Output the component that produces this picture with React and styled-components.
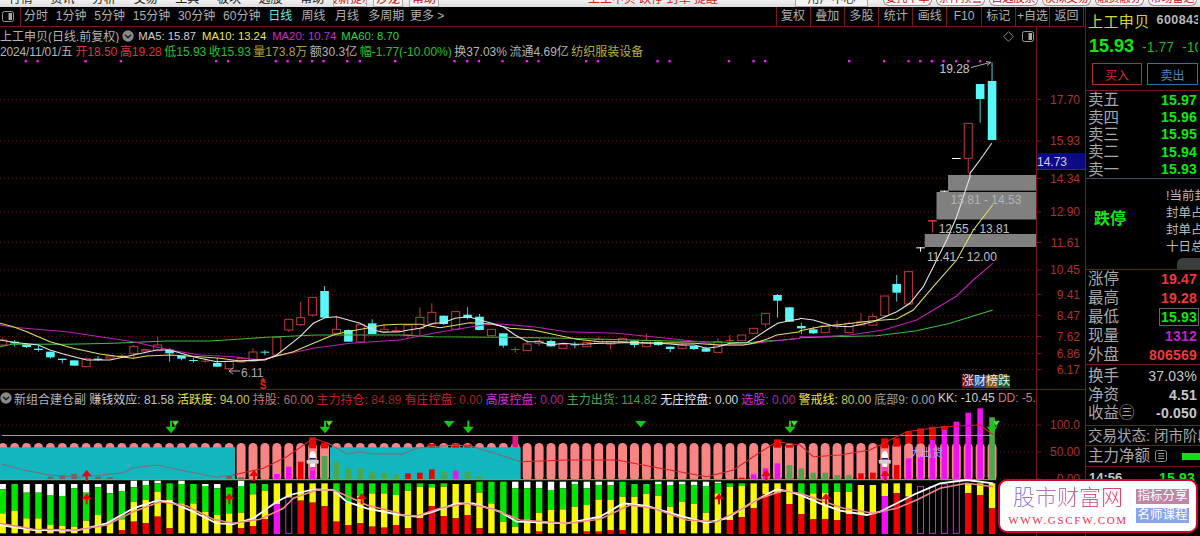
import React from 'react';
import styled, { createGlobalStyle } from 'styled-components';

const FONT = `"Liberation Sans", "Noto Sans CJK SC", sans-serif`;
const RULE = '#7a1818';

const Global = createGlobalStyle`
  html, body { margin: 0; padding: 0; background: #000; overflow: hidden; }
  * { box-sizing: border-box; }
`;

const Shell = styled.div`
  position: relative; width: 1200px; height: 536px; overflow: hidden;
  background: #000; font-family: ${FONT}; font-size: 12px; color: #b4b4b4;
  display: flex; flex-direction: column;
`;

/* ---------- clipped window strip ---------- */
const Strip = styled.div`
  height: 7px; flex: none; display: flex; align-items: flex-end; overflow: hidden;
  background: linear-gradient(#f2f2f2, #dcdcdc);
`;
const StripGroup = styled.div`
  width: ${p => p.$w}px; flex: none; height: 7px; display: flex; align-items: flex-end;
  justify-content: ${p => p.$justify || 'flex-start'}; gap: ${p => p.$gap || 0}px;
`;
const StripLabel = styled.span`
  flex: none; line-height: 14px; height: 14px; margin-bottom: 1px; margin-left: ${p => p.$ml || 0}px; white-space: nowrap;
  color: ${p => p.$c || '#222'}; font-size: ${p => p.$s || 12}px;
`;
const StripTab = styled.span`
  flex: none; width: ${p => p.$w}px; height: 7px; display: flex; align-items: flex-end; justify-content: center;
  border: 1px solid #a8a8a8; border-top: 0; background: #f3f3f3; overflow: hidden;
  color: ${p => p.$c || '#c11'}; white-space: nowrap; line-height: 14px;
`;
const StripPill = styled.span`
  flex: none; width: 49px; height: 6px; margin-bottom: 1px; display: flex; align-items: flex-end; justify-content: center;
  border: 1px solid #9c8a8a; border-top: 0; border-radius: 0 0 6px 6px; background: #fafafa; overflow: hidden;
  color: #c11; white-space: nowrap; line-height: 14px; font-size: 11px;
`;

/* ---------- layout ---------- */
const Body = styled.div`flex: 1; display: flex; min-height: 0;`;
const Main = styled.div`width: 1085px; flex: none; display: flex; flex-direction: column;`;

const Toolbar = styled.div`
  height: 20px; flex: none; display: flex; align-items: center; border-bottom: 1px solid ${RULE};
`;
const ToolIconCell = styled.div`
  width: 21px; height: 19px; flex: none; display: flex; align-items: center; padding-left: 2px;
  border-right: 1px solid ${RULE};
`;
const PeriodList = styled.div`flex: 1; display: flex; align-items: center; padding-left: 3px; gap: 7.8px;`;
const Period = styled.span`
  white-space: nowrap; line-height: 19px; color: ${p => (p.$on ? '#6fe6e6' : '#b0b0b0')};
  margin-left: ${p => p.$ml || 0}px;
`;
const ToolButtons = styled.div`display: flex; height: 19px; flex: none;`;
const ToolButton = styled.span`
  width: ${p => p.$w || 34.2}px; display: flex; align-items: center; justify-content: center; white-space: nowrap;
  border-left: 1px solid ${RULE}; color: #b0b0b0; line-height: 19px;
`;

const PaneRow = styled.div`
  display: flex; flex: none; height: ${p => p.$h}px; border-top: ${p => (p.$rule ? `1px solid ${RULE}` : '0')};
`;
const Plot = styled.div`
  position: relative; width: 1037px; flex: none; display: flex; flex-direction: column;
  border-right: 1px solid ${RULE}; overflow: hidden;
`;
const Axis = styled.svg`display: block; width: 48px; flex: none; height: 100%;`;
const Canvas = styled.svg`display: block; width: 1036px; flex: 1; min-height: 0;`;

const Head = styled.div`height: 31px; flex: none; position: relative; padding-top: 1px;`;
const InfoRow = styled.div`
  display: flex; align-items: center; height: 15px; gap: ${p => p.$gap || 0}px; white-space: nowrap; overflow: hidden;
`;
const Seg = styled.span`
  color: ${p => p.$c || '#b4b4b4'}; flex: none; margin-left: ${p => p.$ml || 0}px;
  font-size: ${p => p.$s || 12}px; letter-spacing: ${p => p.$ls || 0}px;
`;
const CornerIcons = styled.div`
  position: absolute; right: 2px; top: 4px; display: flex; gap: 8px; align-items: center;
`;
const RoundIcon = styled.svg`flex: none; display: block;`;

const IndHead = styled.div`
  height: 16px; flex: none; display: flex; align-items: center; gap: 3.1px; white-space: nowrap; overflow: hidden;
`;
const Pair = styled.span`color: ${p => p.$c}; flex: none;`;
const Val = styled.span`color: ${p => p.$c};`;

const Rank = styled.div`
  position: absolute; left: 962px; top: 348px; display: flex; height: 13px;
`;
const RankCell = styled.span`
  width: 12px; text-align: center; line-height: 13px; font-size: 12px; color: #e8e8e8; background: ${p => p.$bg};
`;

/* ---------- side panel ---------- */
const Side = styled.div`
  width: 115px; flex: none; display: flex; flex-direction: column; overflow: hidden; white-space: nowrap;
  border-left: 1px solid ${RULE};
`;
const Section = styled.div`
  flex: none; height: ${p => p.$h}px; border-bottom: 1px solid ${p => p.$line || RULE}; padding: ${p => p.$pad || '0 2px 0 2px'};
  display: flex; flex-direction: column; justify-content: ${p => p.$justify || 'flex-start'}; overflow: hidden;
`;
const NameRow = styled.div`display: flex; align-items: center; height: 26px; overflow: hidden;`;
const StockName = styled.span`color: #d6d63c; font-size: 15px; letter-spacing: .4px; flex: none;`;
const StockCode = styled.span`color: #b8b8b8; font-size: 12.5px; font-weight: 700; margin-left: 7px; letter-spacing: .4px; flex: none;`;
const QuoteRow = styled.div`display: flex; align-items: center; height: 27px; overflow: hidden;`;
const Price = styled.span`color: #10e810; font-weight: 700; font-size: 18px; flex: none; margin-left: 1px;`;
const Change = styled.span`color: #18b818; font-size: 14px; flex: none; margin-left: ${p => p.$ml}px;`;
const TradeRow = styled.div`display: flex; gap: 5px; padding: 3px 0 0 4px;`;
const TradeBtn = styled.span`
  width: ${p => p.$w}px; height: 22px; flex: none; display: flex; align-items: center; justify-content: center;
  border: 1px solid ${p => p.$c}; color: ${p => p.$t}; font-size: 12px;
`;
const Row = styled.div`
  display: flex; justify-content: ${p => p.$justify || 'space-between'}; align-items: center; height: ${p => p.$h}px; flex: none;
  padding: ${p => p.$pad || 0};
`;
const RowLabel = styled.span`
  color: ${p => p.$c || '#a8a8a8'}; font-size: ${p => p.$s || 15.5}px; font-weight: ${p => p.$w || 400}; line-height: ${p => p.$h || 18}px;
`;
const RowValue = styled.span`
  color: ${p => p.$c}; font-size: 14px; font-weight: ${p => p.$w || 700}; letter-spacing: .2px; padding: 0 1px;
  outline: ${p => (p.$box ? '1px solid #666' : 'none')}; outline-offset: 0;
`;
const LimitBlock = styled.div`flex: 1; display: flex; align-items: center; min-height: 0;`;
const LimitTag = styled.span`color: #10e810; font-size: 16px; font-weight: 700; margin: -14px 0 0 6px; flex: none;`;
const LimitList = styled.div`margin-left: 40px; display: flex; flex-direction: column; flex: none; margin-top: -4px;`;
const LimitLine = styled.span`color: #b8b8b8; font-size: 12.5px; line-height: 16.8px;`;
const GrayTab = styled.span`
  position: absolute; left: 1177px; top: 258px; width: 30px; height: 11px; background: #3c3c3c; border-radius: 6px 6px 0 0;
`;
const FlowBar = styled.span`width: 24px; height: 7px; background: #10e010; margin-left: 15px; flex: none;`;
const SheetIcon = styled.svg`flex: none; display: block; margin-left: 5px;`;

/* ---------- watermark ---------- */
const Stamp = styled.div`
  position: absolute; left: 998px; top: 479px; width: 200px; height: 54px; border: 2px solid #d4002c; border-radius: 9px;
  background: #fff; display: flex; align-items: center; padding-left: 12px;
`;
const StampLeft = styled.div`width: 112px; flex: none; display: flex; flex-direction: column; align-items: center;`;
const StampTitle = styled.span`
  font-size: 22px; line-height: 26px; font-weight: 300; white-space: nowrap;
  background: linear-gradient(90deg, #8a78e8, #c86ab0 45%, #e83c5c); -webkit-background-clip: text; background-clip: text; color: transparent;
`;
const StampUrl = styled.span`
  font-family: "Liberation Serif", serif; font-size: 11px; letter-spacing: 1.7px; color: #e8304c; line-height: 13px; margin-top: 3px; white-space: nowrap;
`;
const StampTags = styled.div`margin-left: 12px; display: flex; flex-direction: column; gap: 4px;`;
const StampTag = styled.span`
  width: 53px; height: 15px; background: ${p => p.$bg}; color: #fff; font-size: 12.5px; line-height: 15px; text-align: center; white-space: nowrap;
`;

/* ---------- data ---------- */
const barX = i => 2.7 + 11.92 * i;
const pts = (list, base, xo = 0) => list.map(([x, y]) => `${(xo + x / 3).toFixed(1)},${(base + y / 3).toFixed(1)}`).join(' ');

const dots = [
  ...[77, 112, 256, 362, 648, 684, 827, 862, 900, 936, 970, 1041, 1079, 1185].map(x => x / 3),
  ...[163, 201, 236, 307, 380, 415, 558, 593, 772, 808, 986, 1060, 1095].map(x => 400 + x / 3),
  ...[147, 252, 325, 360, 395, 430, 468, 504, 540].map(x => 800 + x / 3),
];

// [top, bottom, wickTop, wickBottom, kind] in 3x crop coordinates
const candlesA = [
  [180, 195, 172, 198, 'r'], [185, 190, 180, 200, 'c'], [193, 201, 190, 204, 'c'], [206, 210, 197, 215, 'c'],
  [215, 232, 215, 236, 'c'], [236, 240, 236, 250, 'c'], [241, 257, 241, 257, 'c'], [236, 260, 232, 262, 'r'],
  [236, 240, 228, 243, 'c'], [228, 234, 224, 236, 'r'], [227, 231, 224, 233, 'o'], [200, 220, 195, 238, 'r'],
  [209, 213, 209, 213, 'r'], [195, 212, 170, 212, 'r'], [209, 220, 205, 245, 'c'], [228, 236, 228, 241, 'c'],
  [240, 243, 234, 248, 'c'], [242, 245, 235, 248, 'f'], [249, 260, 235, 260, 'c'], [244, 266, 244, 268, 'r'],
  [235, 246, 232, 248, 'r'], [216, 243, 205, 245, 'r'], [215, 218, 210, 226, 'c'], [172, 225, 172, 225, 'r'],
  [118, 150, 118, 155, 'r'], [113, 134, 65, 138, 'r'], [52, 105, 52, 110, 'r'], [33, 113, 18, 113, 'c'],
  [148, 160, 110, 160, 'r'], [150, 185, 148, 185, 'c'], [134, 186, 134, 186, 'r'], [130, 162, 118, 162, 'c'],
  [148, 155, 132, 160, 'r'], [152, 155, 140, 158, 'r'],
  [135, 165, 135, 175, 'r'], [112, 145, 82, 165, 'r'], [97, 132, 70, 135, 'r'], [107, 132, 107, 135, 'c'],
  [95, 148, 95, 150, 'r'], [104, 114, 82, 118, 'c'], [110, 150, 102, 150, 'c'], [148, 167, 148, 167, 'r'],
  [160, 197, 160, 203, 'c'], [207, 210, 200, 218, 'f'], [192, 212, 180, 212, 'r'], [183, 190, 175, 198, 'r'],
  [183, 199, 178, 200, 'c'], [193, 205, 193, 205, 'r'], [193, 196, 185, 205, 'c'], [187, 200, 187, 200, 'r'],
  [178, 190, 170, 190, 'r'], [184, 192, 184, 208, 'r'], [175, 187, 175, 187, 'r'], [182, 195, 182, 203, 'c'],
  [182, 200, 160, 200, 'r'], [185, 195, 185, 198, 'c'], [200, 207, 200, 217, 'c'], [195, 205, 190, 208, 'r'],
  [198, 207, 198, 210, 'c'], [205, 215, 200, 216, 'c'], [185, 217, 175, 217, 'r'], [180, 183, 165, 186, 'f'],
  [165, 182, 165, 182, 'r'], [145, 160, 145, 160, 'r'], [100, 132, 100, 143, 'r'], [45, 62, 42, 113, 'c'],
  [82, 125, 82, 125, 'c'],
];
const candlesB = [
  [468, 475, 458, 492, 'c'], [478, 490, 470, 492, 'c'], [468, 488, 468, 488, 'r'], [463, 466, 452, 478, 'f'],
  [460, 488, 455, 490, 'r'], [455, 465, 430, 468, 'r'], [440, 465, 430, 465, 'r'], [378, 437, 378, 437, 'r'],
  [342, 368, 315, 395, 'c'], [305, 402, 305, 402, 'r'], [232, 234, 232, 245, 'w'], [150, 155, 150, 188, 'f'],
  [62, 64, 62, 66, 'w'],
];
const candlesC = [
  [474, 476, 474, 476, 'w'], [370, 475, 370, 520, 'r'], [252, 297, 252, 368, 'c'], [243, 420, 187, 243, 'c'],
];

const ma5 = [
  ...pts([[0, 180], [40, 187], [115, 195], [150, 210], [190, 222], [260, 240], [330, 240], [400, 225], [470, 210], [510, 210], [580, 230], [650, 245], [720, 243], [795, 240], [830, 225], [900, 170], [940, 130], [975, 113], [1010, 110], [1080, 130], [1120, 150], [1150, 157], [1199, 155]], 280).split(' '),
  ...pts([[25, 150], [60, 145], [100, 130], [130, 128], [165, 115], [205, 110], [240, 120], [275, 130], [310, 140], [345, 165], [383, 185], [420, 185], [450, 195], [490, 190], [525, 193], [560, 192], [600, 190], [630, 190], [670, 188], [705, 188], [740, 188], [776, 190], [811, 192], [847, 195], [883, 195], [919, 205], [955, 200], [990, 190], [1040, 188], [1063, 175], [1100, 150], [1133, 130], [1168, 122], [1199, 117]], 280, 400).split(' '),
  ...pts([[0, 445], [40, 450], [100, 468], [150, 470], [220, 455], [290, 425], [330, 400], [370, 350], [410, 270], [440, 210], [470, 140], [510, 20]], 170, 800).split(' '),
  ...pts([[510, 520], [540, 480], [575, 430]], 0, 800).split(' '),
].join(' ');
const ma10 = [
  pts([[0, 130], [40, 140], [80, 155], [150, 185], [220, 205], [300, 222], [360, 230], [400, 235], [440, 228], [510, 225], [600, 230], [660, 235], [720, 243], [795, 238], [830, 228], [880, 215], [940, 190], [1000, 165], [1040, 155], [1100, 145], [1150, 135], [1199, 133]], 280),
  pts([[0, 133], [60, 133], [120, 143], [170, 135], [210, 128], [275, 132], [330, 145], [400, 150], [470, 165], [530, 178], [600, 185], [668, 185], [740, 190], [810, 188], [883, 190], [955, 195], [1030, 195], [1060, 190], [1100, 178], [1130, 165], [1199, 155]], 280, 400),
  pts([[0, 482], [60, 470], [110, 465], [220, 452], [290, 447], [340, 420], [400, 350], [470, 270], [520, 180], [578, 105]], 170, 800),
].join(' ');
const ma20 = [
  pts([[0, 135], [40, 142], [200, 155], [400, 185], [510, 210], [600, 225], [700, 230], [780, 240], [830, 228], [940, 205], [1050, 190], [1199, 180]], 280),
  pts([[0, 180], [100, 160], [170, 148], [250, 135], [300, 132], [400, 140], [500, 155], [650, 160], [800, 175], [900, 185], [955, 195], [1030, 195], [1100, 185], [1199, 175]], 280, 400),
  pts([[0, 500], [60, 500], [150, 495], [250, 480], [350, 450], [470, 378], [520, 330], [578, 280]], 170, 800),
].join(' ');
const ma60 = [
  pts([[0, 200], [40, 192], [200, 193], [340, 190], [500, 183], [630, 183], [800, 172], [950, 165], [1100, 165], [1199, 165]], 280),
  pts([[0, 165], [100, 170], [300, 172], [500, 175], [700, 180], [900, 185], [1040, 188], [1100, 183], [1150, 180], [1199, 175]], 280, 400),
  pts([[0, 503], [100, 500], [230, 497], [350, 482], [450, 460], [578, 420]], 170, 800),
].join(' ');

// stack bars: [top, whiteEnd, greenEnd, yellowEnd, base colour]
const stacks = [
  [312, 328, 400, 460], [312, 312, 392, 460], [312, 338, 415, 460], [312, 338, 415, 460], [312, 345, 435, 460], [312, 348, 438, 460],
  [312, 325, 440, 460], [312, 338, 422, 460], [312, 322, 405, 460], [312, 340, 425, 460], [312, 333, 418, 450, 'r'], [302, 322, 365, 425, 'r'],
  [302, 315, 360, 430, 'r'], [302, 310, 335, 410, 'r'], [310, 310, 360, 445, 'r'], [302, 312, 370, 460], [312, 312, 370, 460], [312, 318, 395, 460],
  [312, 325, 405, 460], [322, 322, 400, 460], [302, 318, 398, 445, 'r'], [310, 310, 343, 438, 'r'], [312, 312, 332, 418, 'r'], [310, 310, 310, 372, 'm'],
  [310, 310, 310, 352], [310, 310, 310, 362, 'r'], [310, 310, 310, 368, 'r'], [310, 310, 310, 378, 'r'], [310, 310, 335, 425, 'r'], [310, 310, 368, 435, 'r'],
  [310, 310, 348, 430, 'r'], [310, 310, 340, 440, 'r'], [310, 310, 340, 443, 'r'], [310, 310, 345, 435, 'r'], [310, 310, 332, 445, 'r'], [310, 310, 320, 415, 'r'],
  [312, 312, 322, 378, 'r'], [310, 310, 320, 408, 'r'], [312, 312, 312, 415, 'r'], [312, 312, 312, 405, 'r'], [305, 305, 338, 445, 'r'], [305, 305, 370, 460],
  [305, 305, 425, 460], [305, 325, 440, 460], [305, 325, 418, 460], [305, 325, 398, 455, 'r'], [305, 330, 390, 460], [305, 325, 388, 460],
  [305, 312, 380, 460], [305, 325, 375, 455, 'r'], [305, 315, 360, 455, 'r'], [305, 315, 360, 450, 'r'], [305, 305, 350, 450, 'r'], [312, 312, 350, 460],
  [312, 312, 342, 460], [305, 312, 348, 460], [305, 315, 380, 460], [305, 312, 365, 460], [305, 315, 372, 460], [305, 318, 398, 460],
  [305, 310, 340, 460], [310, 310, 320, 420, 'r'], [310, 310, 318, 412, 'r'], [310, 310, 310, 385, 'r'], [310, 310, 310, 342, 'r'], [310, 310, 310, 340, 'r'],
  [310, 310, 310, 372, 'r'], [310, 310, 340, 402, 'r'], [310, 310, 340, 418, 'r'], [310, 310, 338, 418, 'r'], [310, 310, 335, 420, 'r'], [310, 310, 335, 402, 'r'],
  [315, 315, 315, 402, 'r'], [315, 315, 315, 402, 'r'], [310, 310, 310, 348, 'm'], [310, 310, 310, 340, 'r'], [310, 310, 310, 350, 'r'], null,
  null, null, null, [310, 310, 310, 340, 'r'], [310, 310, 310, 345, 'r'], [310, 310, 310, 385, 'r'],
];
const outlines = [[24, 352], [77, 320], [78, 320], [79, 312], [80, 300]];

// small bars standing on the zero line: [index, top, bottom, colour]
const GREY = '#6e6464', DG = '#4ca64c', MG = '#f010f0', RD = '#ee0000';
const columns = [
  [4, 290, 298, GREY], [5, 285, 298, GREY], [6, 282, 298, GREY], [8, 290, 298, GREY], [9, 292, 298, GREY], [19, 288, 298, GREY], [20, 292, 298, GREY],
  [23, 282, 298, MG], [24, 260, 298, MG], [25, 245, 298, RD], [26, 255, 298, MG], [26, 172, 205, RD], [27, 228, 298, DG], [27, 188, 205, RD], [28, 245, 298, DG], [29, 265, 298, DG], [30, 265, 298, DG],
  [31, 275, 298, DG], [32, 278, 298, DG], [33, 282, 298, DG], [34, 280, 298, RD], [35, 278, 298, RD], [36, 268, 298, RD], [36, 192, 203, RD], [37, 275, 298, DG], [38, 272, 298, MG], [38, 190, 203, RD], [39, 275, 298, DG], [39, 194, 203, RD], [40, 288, 298, DG],
  [43, 168, 202, '#f0108c'], [62, 293, 298, RD], [63, 283, 298, MG], [64, 265, 298, MG], [65, 250, 298, MG], [65, 178, 203, RD], [66, 255, 298, DG], [66, 195, 203, RD],
  [67, 265, 298, DG], [68, 278, 298, DG], [69, 278, 298, DG], [70, 285, 298, DG], [71, 285, 298, DG], [72, 280, 298, RD], [73, 278, 298, RD],
  [74, 175, 205, RD], [74, 255, 298, MG], [75, 175, 200, RD], [75, 255, 298, RD], [76, 155, 190, RD], [76, 235, 298, MG], [77, 145, 190, RD], [77, 230, 298, MG],
  [78, 140, 180, RD], [78, 180, 298, MG], [79, 138, 150, RD], [79, 150, 298, MG], [80, 125, 298, MG], [81, 98, 298, MG], [82, 85, 298, MG], [83, 112, 298, DG],
];

const upRed = [[260, 285], [260, 355], [688, 355], [762, 285], [1085, 355], [1200 + 957, 355], [1200 + 1099, 285], [2400 + 78, 355], [2400 + 256, 285]];

const lowWhite = [
  pts([[0, 435], [100, 450], [230, 452], [320, 430], [400, 385], [470, 362], [510, 365], [580, 395], [650, 430], [700, 432], [760, 415], [830, 365], [870, 345], [940, 328], [1000, 330], [1040, 365], [1100, 385], [1199, 405]], 380),
  pts([[0, 405], [50, 410], [100, 395], [170, 370], [220, 370], [300, 395], [350, 425], [500, 430], [600, 410], [670, 370], [740, 378], [850, 410], [920, 428], [980, 415], [1060, 365], [1130, 328], [1170, 335], [1199, 345]], 380, 400),
  pts([[0, 345], [60, 370], [120, 392], [200, 405], [240, 395], [290, 370], [350, 340], [420, 310], [500, 300], [580, 310]], 380, 800),
].join(' ');
const lowPink = [
  pts([[0, 430], [100, 448], [230, 450], [320, 435], [400, 395], [480, 365], [560, 378], [640, 418], [700, 430], [780, 418], [850, 385], [880, 355], [950, 330], [1000, 330], [1050, 352], [1100, 375], [1199, 400]], 380),
  pts([[0, 405], [50, 408], [120, 385], [200, 370], [280, 388], [360, 420], [500, 430], [600, 418], [690, 375], [760, 385], [860, 420], [950, 425], [1030, 385], [1080, 355], [1150, 332], [1199, 340]], 380, 400),
  pts([[0, 340], [60, 360], [130, 385], [220, 400], [290, 385], [350, 360], [420, 325], [500, 310], [580, 320]], 380, 800),
].join(' ');
const ratioOnTeal1 = pts([[5, 252], [70, 270], [150, 285], [240, 292], [300, 285], [370, 278], [400, 263], [470, 255], [540, 270], [650, 292], [700, 285]], 380);
const ratioOnPink1 = pts([[700, 285], [790, 265], [860, 230], [940, 175], [985, 190]], 380);
const ratioOnTeal2 = [
  pts([[985, 190], [1040, 222], [1080, 215], [1120, 222], [1199, 222]], 380),
  pts([[0, 225], [50, 205], [95, 200], [170, 195], [220, 200], [300, 225], [360, 245]], 380, 400),
].join(' ');
const ratioOnPink2 = [
  pts([[360, 245], [500, 240], [650, 240], [780, 265], [920, 290], [1000, 270], [1060, 230], [1130, 185], [1199, 195]], 380, 400),
  pts([[0, 195], [40, 230], [120, 225], [210, 210], [250, 190], [320, 155], [430, 140], [540, 135], [580, 165]], 380, 800),
].join(' ');

const priceTicks = [
  [99.5, '17.70'], [141, '15.93'], [178.5, '14.34'], [212, '12.90'], [242.5, '11.61'], [270, '10.45'],
  [294.5, '9.41'], [315.5, '8.47'], [336.5, '7.62'], [353.5, '6.86'], [369.5, '6.17'],
];
const indTicks = [[425, '100.0'], [452, '50.00'], [479, '0.00']];

/* ---------- chart drawings ---------- */
const Candle = ({ x, base, c: [top, bot, wt, wb, kind] }) => {
  const t = base + top / 3, b = base + bot / 3, wTop = base + wt / 3, wBot = base + wb / 3;
  const col = { r: '#c43a3c', f: '#d23434', c: '#58f8f8', o: '#e08a30', w: '#ffffff' }[kind];
  const wick = kind === 'c' ? '#58c8c8' : col;
  return (
    <g>
      <line x1={x} x2={x} y1={wTop} y2={wBot} stroke={wick} strokeWidth="1" />
      {kind === 'r' ? (
        <rect x={x - 4} y={t} width="8" height={b - t} fill="#000" stroke={col} strokeWidth="1" />
      ) : (
        <rect x={x - 4.3} y={t} width="8.6" height={Math.max(b - t, 1)} fill={col} />
      )}
    </g>
  );
};

const PriceChart = () => (
  <Canvas viewBox="0 58 1036 331" preserveAspectRatio="none">
    {priceTicks.map(([y]) => <line key={y} x1="0" x2="1036" y1={y} y2={y} stroke="#5c1414" strokeDasharray="1 3" />)}
    {dots.map(x => <rect key={x} x={x - 1} y="60" width="2.4" height="2.4" fill="#f020f0" />)}
    {candlesA.map((c, i) => <Candle key={i} x={barX(i)} base={280} c={c} />)}
    {candlesB.map((c, i) => <Candle key={i} x={barX(i + 67)} base={170} c={c} />)}
    {candlesC.map((c, i) => <Candle key={i} x={barX(i + 80)} base={0} c={c} />)}
    <rect x="948" y="175" width="88" height="15.7" fill="#808080" />
    <rect x="936.5" y="192" width="99.5" height="27.5" fill="#808080" />
    <rect x="924.7" y="234" width="111.3" height="13" fill="#808080" />
    <polyline points={ma60} fill="none" stroke="#3cc03c" strokeWidth="1.1" />
    <polyline points={ma20} fill="none" stroke="#c020b8" strokeWidth="1.1" />
    <polyline points={ma10} fill="none" stroke="#e0e060" strokeWidth="1.1" />
    <polyline points={ma5} fill="none" stroke="#e4e4e4" strokeWidth="1.1" />
    <g fontFamily={FONT} fontSize="12">
      <text x="950.6" y="204" fill="#b4b4b4">13.81 - 14.53</text>
      <text x="938.7" y="233" fill="#c0c0c0">12.55 - 13.81</text>
      <text x="927" y="261" fill="#c0c0c0">11.41 - 12.00</text>
      <text x="939.5" y="73" fill="#c8c8c8">19.28</text>
      <text x="241" y="377" fill="#a8a8a8">6.11</text>
    </g>
    <path d="M971 67.5 L990 62.5 M986 61.5 L991 62.4 L987 65.5" fill="none" stroke="#aaa" strokeWidth="1" />
    <path d="M229 371 H240 M233 368 L229 371 L233 374" fill="none" stroke="#aaa" strokeWidth="1" />
    <path d="M263 377.5 L260 381 H266 Z" fill="#d02020" />
    <text x="263" y="388.5" textAnchor="middle" fontFamily={FONT} fontSize="10" fontWeight="700" fill="#e02020">S</text>
  </Canvas>
);

const UpArrow = ({ x, y }) => (
  <g fill="#f00000">
    <rect x={x - 1} y={y - 3} width="2" height="9" />
    <path d={`M${x - 5} ${y + 1} L${x} ${y - 5} L${x + 5} ${y + 1} Z`} />
  </g>
);

const StackBar = ({ i, s }) => {
  if (!s) return null;
  const [top, w, g, yw, base] = s;
  const x = barX(i) - 3.2;
  const Y = v => 380 + v / 3;
  return (
    <g>
      {w > top && <rect x={x} y={Y(top)} width="6.4" height={(w - top) / 3} fill="#ffffff" />}
      {g > w && <rect x={x} y={Y(w)} width="6.4" height={(g - w) / 3} fill="#00e600" />}
      {yw > g && <rect x={x} y={Y(g)} width="6.4" height={(yw - g) / 3} fill="#f8f800" />}
      {base && <rect x={x} y={Y(yw)} width="6.4" height={(462 - yw) / 3} fill={base === 'm' ? '#f010f0' : '#f00000'} />}
    </g>
  );
};

const Figure = ({ x }) => (
  <g>
    <ellipse cx={x} cy="456" rx="3.2" ry="5" fill="#fff" />
    <rect x={x - 6} y="460" width="12" height="3.6" fill="#cfcfcf" />
    <rect x={x - 3} y="458" width="6" height="1.6" fill="#301080" />
    <rect x={x - 3} y="467" width="6" height="4" fill="#f040c0" />
    <rect x={x - 2.5} y="463.6" width="5" height="3.4" fill="#fff" />
  </g>
);

const DownMark = ({ x, y, stem, flag }) => (
  <g fill="#16c816">
    <path d={`M${x - 5.5} ${y} L${x} ${y + 6.6} L${x + 5.5} ${y} Z`} />
    {stem && <rect x={x - 1} y={y - 6} width="2" height="7" />}
    {flag && <path d={`M${x + 1} ${y - 6} H${x + 8} L${x + 4} ${y} Z`} fill="#22d022" />}
    {flag && <path d={`M${x + 2.5} ${y - 5} L${x + 4.2} ${y - 3} L${x + 6} ${y - 5}`} fill="none" stroke="#e8e840" strokeWidth=".7" />}
  </g>
);

const IndicatorChart = () => (
  <Canvas viewBox="0 406 1036 130" preserveAspectRatio="none">
    {indTicks.map(([y]) => <line key={y} x1="0" x2="1036" y1={y} y2={y} stroke="#5c1414" strokeDasharray="1 3" />)}
    {stacks.map((_, i) => <rect key={i} x={barX(i) - 4.5} y="443" width="9" height="38" rx="4.5" fill="#f98484" />)}
    <rect x="0" y="447.3" width="235" height="32.2" fill="#12b6bf" />
    <rect x="330" y="447.3" width="190.7" height="32.2" fill="#12b6bf" />
    <rect x="0" y="480" width="1036" height="56" fill="#000" />
    {columns.map(([i, a, b, c], k) => (
      <rect key={k} x={barX(i) - (c === RD && b < 250 ? 3.5 : 2.8)} y={380 + a / 3} width={c === RD && b < 250 ? 7 : 5.6} height={(b - a) / 3} fill={c} />
    ))}
    {stacks.map((s, i) => <StackBar key={i} i={i} s={s} />)}
    {outlines.map(([i, t]) => (
      <rect key={i} x={barX(i) - 3} y={380 + t / 3} width="6" height={(460 - t) / 3} fill="#000" stroke="#b838c8" strokeWidth="1" />
    ))}
    <line x1="2" x2="993" y1="435.5" y2="435.5" stroke="#b0a040" strokeWidth="1.2" />
    <line x1="0" x2="996" y1="479.7" y2="479.7" stroke="#56b84a" strokeWidth="1.2" />
    <polyline points={ratioOnTeal1} fill="none" stroke="#846a70" strokeWidth="1.1" />
    <polyline points={ratioOnPink1} fill="none" stroke="#d82020" strokeWidth="1.1" />
    <polyline points={ratioOnTeal2} fill="none" stroke="#846a70" strokeWidth="1.1" />
    <polyline points={ratioOnPink2} fill="none" stroke="#d82020" strokeWidth="1.1" />
    <polyline points={lowWhite} fill="none" stroke="#ffffff" strokeWidth="1.8" />
    <polyline points={lowPink} fill="none" stroke="#f08888" strokeWidth="1.6" />
    {upRed.map(([z, y], i) => <UpArrow key={i} x={z / 3} y={380 + y / 3} />)}
    <Figure x={barX(26)} />
    <Figure x={barX(74)} />
    <DownMark x={171} y={426.7} stem flag />
    <DownMark x={325} y={426.7} stem flag />
    <DownMark x={449} y={421} />
    <DownMark x={468.3} y={426.7} stem />
    <DownMark x={640.7} y={421} />
    <DownMark x={790} y={426.7} stem flag />
    <DownMark x={992} y={426.7} stem flag />
    <text x="910" y="457" fontFamily={FONT} fontSize="11" fill="#a8a0ff">大出货</text>
  </Canvas>
);

const AxisTicks = ({ ticks }) => ticks.map(([y, t]) => (
  <g key={t}>
    <line x1="1037" x2="1041" y1={y} y2={y} stroke="#7a1818" />
    <text x="1080" y={y + 4.3} textAnchor="end" fontFamily={FONT} fontSize="12" fill="#aa3232">{t}</text>
  </g>
));

const Chevron = () => (
  <RoundIcon width="12" height="12" viewBox="0 0 12 12">
    <circle cx="6" cy="6" r="5.7" fill="#8a8a8a" />
    <path d="M3 4.8 L6 7.8 L9 4.8" fill="none" stroke="#1c1c1c" strokeWidth="1.5" />
  </RoundIcon>
);
const PanelIcon = () => (
  <RoundIcon width="12" height="11" viewBox="0 0 12 11">
    <rect x=".5" y=".5" width="11" height="10" rx="2" fill="none" stroke="#999" />
    <rect x="6.5" y="2" width="3.5" height="7" fill="#aaa" />
  </RoundIcon>
);

const periods = ['1分钟', '5分钟', '15分钟', '30分钟', '60分钟'];
const later = ['周线', '月线', '多周期'];
const tools = ['复权', '叠加', '多股', '统计', '画线', 'F10', '标记', '+自选', '返回'];
const asks = [['卖五', '15.97'], ['卖四', '15.96'], ['卖三', '15.95'], ['卖二', '15.94'], ['卖一', '15.93']];

export default function App() {
  return (
    <Shell>
      <Global />
      <Strip>
        <StripGroup $w={333} $justify="space-around">
          {['行情', '资讯', '分析', '交易', '工具', '板块', '选股', '帮助'].map(t => <StripLabel key={t}>{t}</StripLabel>)}
        </StripGroup>
        <StripGroup $w={110} $gap={6}>
          <StripTab $w={34}>最新提示</StripTab>
          <StripTab $w={30}>沙龙</StripTab>
          <StripTab $w={30}>帮助</StripTab>
        </StripGroup>
        <StripGroup $w={352} $justify="center">
          <StripLabel $c="#d02020" $ml={68}>上工申贝 跌停 封单 提醒</StripLabel>
        </StripGroup>
        <StripGroup $w={88}>
          <StripTab $w={73} $c="#333">用户中心</StripTab>
        </StripGroup>
        <StripGroup $w={317} $gap={4}>
          {['委托下单', '条件预警', '自选股票', '模拟交易', '融资融券', '市场雷达'].map(t => <StripPill key={t}>{t}</StripPill>)}
        </StripGroup>
      </Strip>
      <Body>
        <Main>
          <Toolbar>
            <ToolIconCell><PanelIcon /></ToolIconCell>
            <PeriodList>
              <Period>分时</Period>
              {periods.map(p => <Period key={p}>{p}</Period>)}
              <Period $on>日线</Period>
              {later.map(p => <Period key={p} $ml={1.5}>{p}</Period>)}
              <Period $ml={-2}>更多 &gt;</Period>
            </PeriodList>
            <ToolButtons>
              {tools.map(t => <ToolButton key={t}>{t}</ToolButton>)}
              <ToolButton $w={1.8} />
            </ToolButtons>
          </Toolbar>
          <PaneRow $h={362}>
            <Plot>
              <Head>
                <InfoRow>
                  <Seg>上工申贝(日线.前复权)</Seg>
                  <Seg $ml={3}><Chevron /></Seg>
                  <Seg $ml={4} $s={11.3} $c="#d0d0d0">MA5: 15.87</Seg>
                  <Seg $ml={6} $s={11.3} $c="#e8e850">MA10: 13.24</Seg>
                  <Seg $ml={6} $s={11.3} $c="#c030c8">MA20: 10.74</Seg>
                  <Seg $ml={5} $s={11.3} $c="#30d040">MA60: 8.70</Seg>
                </InfoRow>
                <InfoRow $gap={2.5}>
                  <Seg $ls={-0.15}>2024/11/01/五</Seg>
                  <Seg $c="#d83838">开18.50</Seg>
                  <Seg $c="#d83838">高19.28</Seg>
                  <Seg $c="#20c030">低15.93</Seg>
                  <Seg $c="#20c030">收15.93</Seg>
                  <Seg $c="#b0a030">量173.8万</Seg>
                  <Seg>额30.3亿</Seg>
                  <Seg $c="#20c030">幅-1.77(-10.00%)</Seg>
                  <Seg>换37.03%</Seg>
                  <Seg>流通4.69亿</Seg>
                  <Seg $c="#b8b030">纺织服装设备</Seg>
                </InfoRow>
                <CornerIcons>
                  <RoundIcon width="11" height="11" viewBox="0 0 11 11">
                    <path d="M5.5 .7 L10.3 5.5 L5.5 10.3 L.7 5.5 Z" fill="none" stroke="#888" />
                  </RoundIcon>
                  <PanelIcon />
                </CornerIcons>
              </Head>
              <PriceChart />
              <Rank>
                <RankCell $bg="#6a1010">涨</RankCell>
                <RankCell $bg="#204890">财</RankCell>
                <RankCell $bg="#8a5010">榜</RankCell>
                <RankCell $bg="#106020">跌</RankCell>
              </Rank>
            </Plot>
            <Axis viewBox="1037 27 48 362" preserveAspectRatio="none">
              <AxisTicks ticks={priceTicks} />
              <rect x="1037" y="153" width="48" height="16.5" fill="#0a0a86" />
              <line x1="1037" x2="1085" y1="169.5" y2="169.5" stroke="#7a1818" />
              <text x="1037" y="165.5" fontFamily={FONT} fontSize="12" fill="#d0d0d8">14.73</text>
            </Axis>
          </PaneRow>
          <PaneRow $h={147} $rule>
            <Plot>
              <IndHead>
                <Chevron />
                <Seg $ml={-1}>新组合建仓副</Seg>
                <Pair $c="#c8c8c8">赚钱效应: <Val $c="#c0c0c0">81.58</Val></Pair>
                <Pair $c="#e4e44c">活跃度: <Val $c="#c8c850">94.00</Val></Pair>
                <Pair $c="#c87878">持股: <Val $c="#b06868">60.00</Val></Pair>
                <Pair $c="#c82020">主力持仓: <Val $c="#a82020">84.89</Val></Pair>
                <Pair $c="#c82020">有庄控盘: <Val $c="#a82020">0.00</Val></Pair>
                <Pair $c="#d030d0">高度控盘: <Val $c="#a828a8">0.00</Val></Pair>
                <Pair $c="#4ca64c">主力出货: <Val $c="#4c964c">114.82</Val></Pair>
                <Pair $c="#e8e8e8">无庄控盘: <Val $c="#d8d8d8">0.00</Val></Pair>
                <Pair $c="#d030d0">选股: <Val $c="#a828a8">0.00</Val></Pair>
                <Pair $c="#e4e44c">警戒线: <Val $c="#c8c850">80.00</Val></Pair>
                <Pair $c="#a0a0a0">底部9: <Val $c="#a8a8a8">0.00</Val></Pair>
                <Pair $c="#d0d0d0">KK: <Val $c="#d0d0d0">-10.45</Val></Pair>
                <Pair $c="#c87878">DD: <Val $c="#c87878">-5.46</Val></Pair>
              </IndHead>
              <IndicatorChart />
            </Plot>
            <Axis viewBox="1037 390 48 146" preserveAspectRatio="none">
              <AxisTicks ticks={indTicks} />
            </Axis>
          </PaneRow>
        </Main>
        <Side>
          <Section $h={84}>
            <NameRow><StockName>上工申贝</StockName><StockCode>600843</StockCode></NameRow>
            <QuoteRow>
              <Price>15.93</Price>
              <Change $ml={8}>-1.77</Change>
              <Change $ml={8}>-10.00%</Change>
            </QuoteRow>
            <TradeRow>
              <TradeBtn $w={50} $c="#b03030" $t="#d83030">买入</TradeBtn>
              <TradeBtn $w={51} $c="#3a70a8" $t="#4a88c8">卖出</TradeBtn>
            </TradeRow>
          </Section>
          <Section $h={88} $line="#2c4c70" $justify="center">
            {asks.map(([a, b]) => (
              <Row key={a} $h={17.4}><RowLabel $h={17}>{a}</RowLabel><RowValue $c="#10e810">{b}</RowValue></Row>
            ))}
          </Section>
          <Section $h={91}>
            <LimitBlock>
              <LimitTag>跌停</LimitTag>
              <LimitList>
                <LimitLine>!当前封</LimitLine>
                <LimitLine>封单占</LimitLine>
                <LimitLine>封单占</LimitLine>
                <LimitLine>十日总</LimitLine>
              </LimitList>
            </LimitBlock>
          </Section>
          <Section $h={95} $justify="center">
            <Row $h={18.9}><RowLabel>涨停</RowLabel><RowValue $c="#f03838">19.47</RowValue></Row>
            <Row $h={18.9}><RowLabel>最高</RowLabel><RowValue $c="#f03838">19.28</RowValue></Row>
            <Row $h={18.9}><RowLabel>最低</RowLabel><RowValue $c="#10e810" $box>15.93</RowValue></Row>
            <Row $h={18.9}><RowLabel>现量</RowLabel><RowValue $c="#c020d8">1312</RowValue></Row>
            <Row $h={18.9}><RowLabel>外盘</RowLabel><RowValue $c="#f03838">806569</RowValue></Row>
          </Section>
          <Section $h={61} $pad="2px 2px 0 2px">
            <Row $h={18.6}><RowLabel>换手</RowLabel><RowValue $c="#c8c8c8" $w={400}>37.03%</RowValue></Row>
            <Row $h={18.6}><RowLabel>净资</RowLabel><RowValue $c="#c8c8c8">4.51</RowValue></Row>
            <Row $h={18.6}><RowLabel>收益㊂</RowLabel><RowValue $c="#c8c8c8">-0.050</RowValue></Row>
          </Section>
          <Section $h={20} $justify="center">
            <RowLabel $s={14.5}>交易状态: 闭市阶段</RowLabel>
          </Section>
          <Section $h={21}>
            <Row $h={20} $justify="flex-start">
              <RowLabel>主力净额</RowLabel>
              <SheetIcon width="12" height="12" viewBox="0 0 12 12">
                <rect x=".5" y=".5" width="11" height="11" rx="2" fill="none" stroke="#888" />
                <path d="M3 3.5 H9 M3 6 H9 M3 8.5 H9" stroke="#999" />
              </SheetIcon>
              <FlowBar />
            </Row>
          </Section>
          <Row $h={22} $pad="0 4px 0 3px">
            <RowLabel $s={13} $w={700} $c="#c8c8c8">14:56</RowLabel>
            <RowValue $c="#10e810">15.93</RowValue>
          </Row>
        </Side>
      </Body>
      <GrayTab />
      <Stamp>
        <StampLeft>
          <StampTitle>股市财富网</StampTitle>
          <StampUrl>WWW.GSCFW.COM</StampUrl>
        </StampLeft>
        <StampTags>
          <StampTag $bg="#c084a4">指标分享</StampTag>
          <StampTag $bg="#8aa4ec">名师课程</StampTag>
        </StampTags>
      </Stamp>
    </Shell>
  );
}
